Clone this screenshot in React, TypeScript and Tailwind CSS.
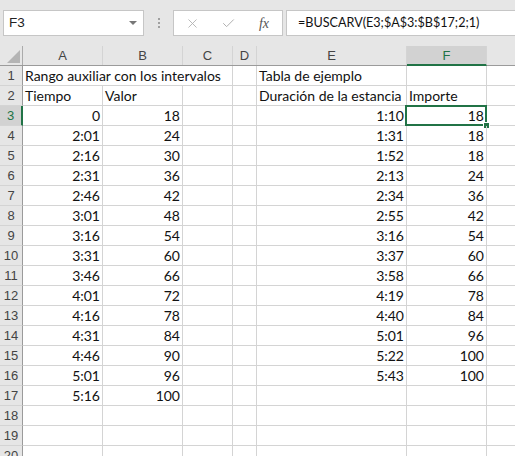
import { X, Check } from 'lucide-react';

const cols = [
  { key: 'A', w: 'w-[80px]' },
  { key: 'B', w: 'w-[80px]' },
  { key: 'C', w: 'w-[50px]' },
  { key: 'D', w: 'w-[24px]' },
  { key: 'E', w: 'w-[150px]' },
  { key: 'F', w: 'w-[80px]' },
];

const left = [
  ['0', '18'], ['2:01', '24'], ['2:16', '30'], ['2:31', '36'], ['2:46', '42'],
  ['3:01', '48'], ['3:16', '54'], ['3:31', '60'], ['3:46', '66'], ['4:01', '72'],
  ['4:16', '78'], ['4:31', '84'], ['4:46', '90'], ['5:01', '96'], ['5:16', '100'],
];
const right = [
  ['1:10', '18'], ['1:31', '18'], ['1:52', '18'], ['2:13', '24'], ['2:34', '36'],
  ['2:55', '42'], ['3:16', '54'], ['3:37', '60'], ['3:58', '66'], ['4:19', '78'],
  ['4:40', '84'], ['5:01', '96'], ['5:22', '100'], ['5:43', '100'],
];

type Cell = { text?: string; align?: 'l' | 'r' };

const cellFont = "font-['Lato','Liberation_Sans',sans-serif] text-[14px] text-[#111]";
const hdrFont = "font-['Liberation_Sans',sans-serif] text-[13px]";

function rowCells(r: number): Record<string, Cell> {
  if (r === 2) return { A: { text: 'Tiempo' }, B: { text: 'Valor' }, E: { text: 'Duración de la estancia' }, F: { text: 'Importe' } };
  const out: Record<string, Cell> = {};
  const l = left[r - 3];
  if (l) { out.A = { text: l[0], align: 'r' }; out.B = { text: l[1], align: 'r' }; }
  const g = right[r - 3];
  if (g) { out.E = { text: g[0], align: 'r' }; out.F = { text: g[1], align: 'r' }; }
  return out;
}

function RowHeader({ n }: { n: number }) {
  const sel = n === 3;
  return (
    <div className={`w-[23px] shrink-0 h-full flex items-center justify-center border-b border-[#d4d4d4] ${sel ? 'bg-[#d2d2d2] text-[#217346] border-r-2 border-r-[#217346]' : 'bg-[#e6e6e6] text-[#444] border-r border-r-[#9b9b9b]'} ${hdrFont}`}>
      {n}
    </div>
  );
}

function Row({ n }: { n: number }) {
  if (n === 1) {
    return (
      <div className="flex h-[20px]">
        <RowHeader n={1} />
        <div className={`w-[210px] shrink-0 border-r border-b border-[#d4d4d4] px-[2px] leading-[19px] whitespace-nowrap ${cellFont}`}>Rango auxiliar con los intervalos</div>
        <div className="w-[24px] shrink-0 border-r border-b border-[#d4d4d4]" />
        <div className={`w-[150px] shrink-0 border-r border-b border-[#d4d4d4] px-[2px] leading-[19px] whitespace-nowrap ${cellFont}`}>Tabla de ejemplo</div>
        <div className="w-[80px] shrink-0 border-r border-b border-[#d4d4d4]" />
        <div className="flex-1 border-b border-[#d4d4d4]" />
      </div>
    );
  }
  const data = rowCells(n);
  return (
    <div className="flex h-[20px]">
      <RowHeader n={n} />
      {cols.map((c) => {
        const d = data[c.key];
        const sel = n === 3 && c.key === 'F';
        return (
          <div key={c.key} className={`${c.w} shrink-0 relative border-r border-b border-[#d4d4d4] px-[2px] leading-[19px] whitespace-nowrap overflow-visible ${d?.align === 'r' ? 'text-right' : 'text-left'} ${cellFont}`}>
            {d?.text}
            {sel && (
              <>
                <div className="absolute -left-[2px] -top-[1px] w-[82px] h-[21px] border-2 border-[#217346] pointer-events-none" />
                <div className="absolute -right-[4px] bottom-[-4px] w-[7px] h-[7px] bg-[#217346] border border-white" />
              </>
            )}
          </div>
        );
      })}
      <div className="flex-1 border-b border-[#d4d4d4]" />
    </div>
  );
}

export default function App() {
  const rows = Array.from({ length: 20 }, (_, i) => i + 1);
  return (
    <div className="w-[515px] h-[456px] overflow-hidden bg-white select-none">
      <div className="h-[46px] bg-[#e6e6e6] flex items-start pt-[10px] pl-[3px]">
        <div className="w-[141px] h-[26px] bg-white border border-[#c6c6c6] flex items-center justify-between pl-[5px] pr-[6px]">
          <span className="font-['Liberation_Sans',sans-serif] text-[13.5px] text-[#222]">F3</span>
          <span className="w-0 h-0 border-l-[4px] border-r-[4px] border-t-[4px] border-l-transparent border-r-transparent border-t-[#777]" />
        </div>
        <div className="w-[29px] h-[26px] flex flex-col items-center justify-center gap-[2px]">
          <span className="w-[2px] h-[2px] bg-[#a0a0a0]" />
          <span className="w-[2px] h-[2px] bg-[#a0a0a0]" />
          <span className="w-[2px] h-[2px] bg-[#a0a0a0]" />
        </div>
        <div className="w-[110px] h-[26px] bg-white border border-[#c6c6c6] flex items-center">
          <div className="w-[36px] flex justify-center"><X size={15} strokeWidth={1.4} className="text-[#b0b0b0]" /></div>
          <div className="w-[36px] flex justify-center"><Check size={15} strokeWidth={1.6} className="text-[#b0b0b0]" /></div>
          <div className="w-[36px] flex justify-center font-['Liberation_Serif',serif] italic text-[14px] text-[#555]">fx</div>
        </div>
        <div className="ml-[3px] flex-1 h-[26px] bg-white border border-r-0 border-[#c6c6c6] flex items-center pl-[11px]">
          <span className="font-['Lato','Liberation_Sans',sans-serif] text-[12.6px] text-[#111]">=BUSCARV(E3;$A$3:$B$17;2;1)</span>
        </div>
      </div>
      <div className="flex h-[20px] bg-[#e6e6e6] border-b border-[#9b9b9b]">
        <div className="w-[23px] shrink-0 border-r border-[#ababab] relative">
          <svg className="absolute right-[2px] bottom-[2px]" width="13" height="13"><polygon points="13,0 13,13 0,13" fill="#b4b4b4" /></svg>
        </div>
        {cols.map((c) => {
          const sel = c.key === 'F';
          return (
            <div key={c.key} className={`${c.w} shrink-0 flex items-center justify-center border-r border-[#d4d4d4] ${hdrFont} ${sel ? 'bg-[#d2d2d2] text-[#217346] border-b-2 border-b-[#217346] h-[20px] pt-[1px]' : 'text-[#444]'}`}>
              {c.key}
            </div>
          );
        })}
        <div className="flex-1" />
      </div>
      {rows.map((n) => <Row key={n} n={n} />)}
    </div>
  );
}
